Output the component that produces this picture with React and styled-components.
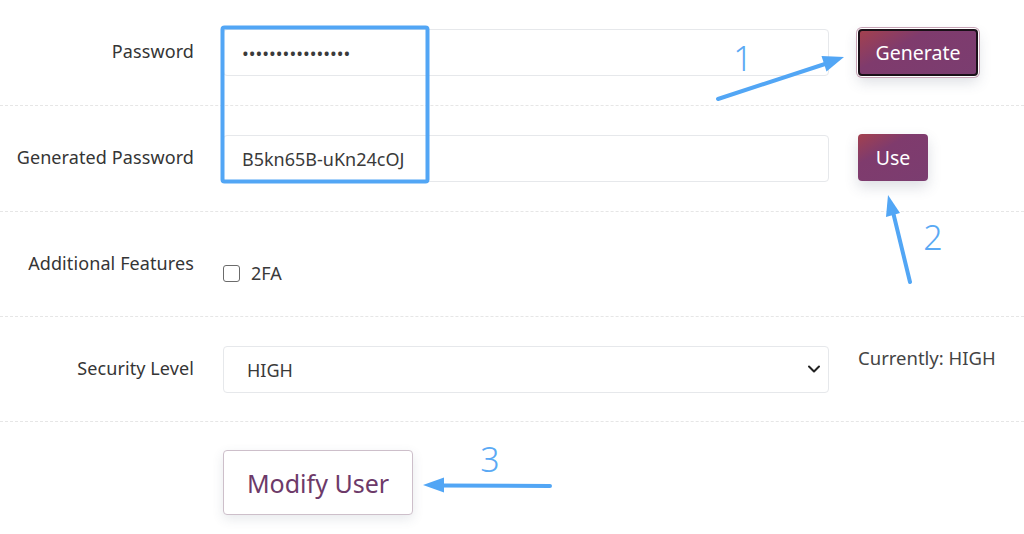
import React from "react";
import styled, { createGlobalStyle } from "styled-components";

const Global = createGlobalStyle`
  html, body { margin: 0; padding: 0; background: #fff; }
  body { font-family: "Noto Sans", "Open Sans", sans-serif; color: #3b3b3b; }
  * { box-sizing: border-box; }
`;

const Page = styled.div`
  position: relative;
  width: 1024px;
  height: 534px;
  overflow: hidden;
`;

const Row = styled.div`
  display: grid;
  grid-template-columns: 194px 606px auto;
  column-gap: 29px;
  align-items: start;
  padding: 29px 0 ${(p) => (p.$tight ? "28px" : "29px")};
  border-bottom: ${(p) => (p.$last ? "none" : "1px dashed #e6e6e6")};
`;

const Label = styled.label`
  display: flex;
  height: 47px;
  align-items: center;
  justify-content: flex-end;
  font-size: 18px;
  letter-spacing: 0.1px;
  color: #353535;
  white-space: nowrap;
  padding-bottom: ${(p) => (p.$raise ? "4px" : "3px")};
`;

const Input = styled.input`
  width: 100%;
  height: 47px;
  border: 1px solid #e6e8eb;
  border-radius: 4px;
  padding: 0 18px;
  font-family: "Noto Sans", sans-serif;
  font-size: 18px;
  color: #3a3a3a;
  background: #fff;
  outline: none;
`;

const PrimaryButton = styled.button`
  height: 47px;
  width: ${(p) => p.$w}px;
  margin-top: ${(p) => p.$mt || 0}px;
  border-radius: 4px;
  border: ${(p) => (p.$focused ? "2px solid #1a1018" : "none")};
  background: linear-gradient(150deg, #a3414f 0%, #7f3b6d 35%, #7b3d70 100%);
  color: #fff;
  font-family: "Noto Sans", sans-serif;
  font-size: 19.5px;
  padding: 0;
  cursor: pointer;
  box-shadow: ${(p) =>
    p.$focused
      ? "0 0 0 1px #fff, 0 0 0 2px #c7a3b6, 0 6px 14px rgba(60, 70, 100, 0.18)"
      : "0 6px 14px rgba(60, 70, 100, 0.18)"};
`;

const CheckRow = styled.div`
  display: flex;
  align-items: flex-start;
  gap: 11px;
  height: 47px;
  padding-top: 24px;
  font-size: 18px;
  color: #3a3a3a;
`;

const Box = styled.span`
  display: inline-block;
  width: 17px;
  height: 17px;
  border: 1.5px solid #6b6b6b;
  border-radius: 3px;
`;

const CheckText = styled.span`
  line-height: 17px;
`;

const SelectWrap = styled.div`
  position: relative;
  width: 100%;
`;

const Select = styled.select`
  width: 100%;
  height: 47px;
  appearance: none;
  border: 1px solid #e6e8eb;
  border-radius: 4px;
  padding: 0 23px;
  font-family: "Noto Sans", sans-serif;
  font-size: 18px;
  color: #3a3a3a;
  background: #fff;
  outline: none;
`;

const Chevron = styled.svg`
  position: absolute;
  right: 8px;
  top: 18px;
  pointer-events: none;
`;

const Note = styled.div`
  font-size: 18.5px;
  line-height: 24px;
  color: #444;
  white-space: nowrap;
`;

const SecondaryButton = styled.button`
  width: 190px;
  height: 65px;
  margin-top: -1px;
  border: 1px solid #cdbfca;
  border-radius: 4px;
  background: #fff;
  color: #6d3a69;
  font-family: "Noto Sans", sans-serif;
  font-size: 25px;
  padding: 0;
  box-shadow: 0 4px 12px rgba(60, 70, 100, 0.12);
  cursor: pointer;
`;

const Overlay = styled.svg`
  position: absolute;
  left: 0;
  top: 0;
  pointer-events: none;
`;

const Num = styled.text`
  font-family: "Noto Sans", sans-serif;
  font-size: 34px;
  font-weight: 300;
  fill: #5aa9f4;
`;

const BLUE = "#52a6f5";

export default function App() {
  return (
    <Page>
      <Global />
      <Row>
        <Label>Password</Label>
        <Input type="password" defaultValue="abcdefghijklmnop" readOnly />
        <PrimaryButton $w={120} $focused>Generate</PrimaryButton>
      </Row>
      <Row>
        <Label>Generated Password</Label>
        <Input type="text" defaultValue="B5kn65B-uKn24cOJ" readOnly />
        <PrimaryButton $w={70} $mt={-1}>Use</PrimaryButton>
      </Row>
      <Row $tight>
        <Label $raise>Additional Features</Label>
        <CheckRow>
          <Box />
          <CheckText>2FA</CheckText>
        </CheckRow>
        <div />
      </Row>
      <Row $tight>
        <Label>Security Level</Label>
        <SelectWrap>
          <Select defaultValue="HIGH">
            <option>HIGH</option>
            <option>MEDIUM</option>
            <option>LOW</option>
          </Select>
          <Chevron width="14" height="10" viewBox="0 0 14 10">
            <path d="M2 2.5 L7 7.5 L12 2.5" fill="none" stroke="#222" strokeWidth="2" strokeLinecap="round" strokeLinejoin="round" />
          </Chevron>
        </SelectWrap>
        <Note>Currently: HIGH</Note>
      </Row>
      <Row $last>
        <div />
        <div>
          <SecondaryButton>Modify User</SecondaryButton>
        </div>
        <div />
      </Row>

      <Overlay width="1024" height="534" viewBox="0 0 1024 534">
        <rect x="222.5" y="27.5" width="205" height="154" rx="2" fill="none" stroke={BLUE} strokeWidth="4" />

        <line x1="718" y1="99" x2="828" y2="63" stroke={BLUE} strokeWidth="4" strokeLinecap="round" />
        <polygon points="844,57 826.5,71.5 821.5,56" fill={BLUE} />
        <Num x="743" y="71" textAnchor="middle">1</Num>

        <line x1="910" y1="282" x2="893" y2="212" stroke={BLUE} strokeWidth="4" strokeLinecap="round" />
        <polygon points="888,195 900,213 886,217" fill={BLUE} />
        <Num x="933" y="250" textAnchor="middle">2</Num>

        <line x1="550" y1="486" x2="440" y2="485.5" stroke={BLUE} strokeWidth="4" strokeLinecap="round" />
        <polygon points="423,485 444,477.5 444,492.5" fill={BLUE} />
        <Num x="490" y="472" textAnchor="middle">3</Num>
      </Overlay>
    </Page>
  );
}
